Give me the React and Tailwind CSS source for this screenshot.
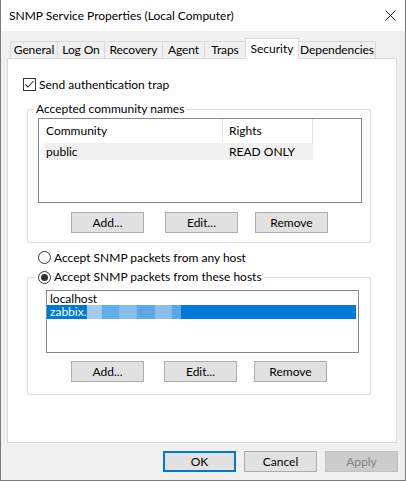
import React from 'react';

const tabs = [
  { label: 'General', w: 'w-[48px]' },
  { label: 'Log On', w: 'w-[48px]' },
  { label: 'Recovery', w: 'w-[59px]' },
  { label: 'Agent', w: 'w-[43px]' },
  { label: 'Traps', w: 'w-[42px]' },
  { label: 'Security', w: 'w-[54px]', active: true },
  { label: 'Dependencies', w: 'w-[78px]' },
];

// blurred part of the host name
const blur = [
  { w: 'w-[15px]', bg: 'bg-[#a3cbee]' },
  { w: 'w-[17px]', bg: 'bg-[#62aee8]' },
  { w: 'w-[18px]', bg: 'bg-[#88bde9]' },
  { w: 'w-[18px]', bg: 'bg-[#5ea9e4]' },
  { w: 'w-[17px]', bg: 'bg-[#8abde8]' },
  { w: 'w-[9px]', bg: 'bg-[#5aa7e6]' },
];

function Button({ children, className = '', variant = 'normal' }) {
  const styles = {
    normal: 'border border-[#adadad] bg-[#e1e1e1] text-black',
    primary: 'border-2 border-[#0078d7] bg-[#e1e1e1] text-black',
    disabled: 'border border-[#bfbfbf] bg-[#cccccc] text-[#838383]',
  };
  return (
    <button
      type="button"
      className={`h-[21px] w-[73px] flex items-center justify-center leading-[14px] ${styles[variant]} ${className}`}
    >
      {children}
    </button>
  );
}

function Checkbox() {
  return (
    <span className="w-[13px] h-[13px] border border-[#333333] bg-white flex items-center justify-center">
      <svg width="11" height="11" viewBox="0 0 11 11">
        <path d="M1.5 5.5 L4 8 L9.5 2" fill="none" stroke="#333333" strokeWidth="1.1" />
      </svg>
    </span>
  );
}

function Radio({ checked }) {
  return (
    <span className="w-[13px] h-[13px] rounded-full border border-[#333333] bg-white flex items-center justify-center">
      {checked && <span className="w-[7px] h-[7px] rounded-full bg-[#333333]" />}
    </span>
  );
}

export default function App() {
  return (
    <div className="w-[406px] h-[481px] flex flex-col bg-[#f0f0f0] border border-t-0 border-[#7a7a7a] font-['Lato',sans-serif] text-[12px] leading-[14px] text-black select-none">
      {/* Title bar */}
      <div className="h-[31px] shrink-0 bg-white flex items-center justify-between pl-[8px]">
        <span>SNMP Service Properties (Local Computer)</span>
        <div className="h-[31px] pr-[9px] flex items-center">
          <svg width="11" height="11" viewBox="0 0 11 11">
            <path d="M0.5 0.5 L10.5 10.5 M10.5 0.5 L0.5 10.5" stroke="#111111" strokeWidth="1" />
          </svg>
        </div>
      </div>

      {/* Tabs */}
      <div className="flex items-end h-[20px] mt-[7px] pl-[9px]">
        {tabs.map((t) =>
          t.active ? (
            <div
              key={t.label}
              className={`${t.w} h-[21px] -mb-px -mr-px relative z-10 bg-white border border-b-0 border-[#d9d9d9] flex items-center justify-center pb-[1px]`}
            >
              {t.label}
            </div>
          ) : (
            <div
              key={t.label}
              className={`${t.w} h-[17px] -mr-px bg-[#f0f0f0] border border-b-0 border-[#d9d9d9] flex items-center justify-center tracking-[-0.1px]`}
            >
              {t.label}
            </div>
          )
        )}
      </div>

      {/* Panel */}
      <div className="ml-[6px] w-[390px] h-[385px] bg-white border border-[#d9d9d9] flex flex-col">
        <label className="mt-[19px] ml-[15px] h-[13px] flex items-center gap-[3px]">
          <Checkbox />
          <span>Send authentication trap</span>
        </label>

        <fieldset className="mt-[11px] ml-[19px] w-[344px] border border-[#dcdcdc] pb-[9px]">
          <legend className="ml-[6px] px-[2px] leading-[14px]">Accepted community names</legend>
          <div className="mt-[2px] ml-[10px] w-[324px] h-[85px] border border-[#828790] pl-[5px]">
            <div className="h-[24px] flex">
              <div className="w-[179px] border-r border-[#e5e5e5] pl-[2px] flex items-center">Community</div>
              <div className="w-[90px] border-r border-[#e5e5e5] pl-[6px] flex items-center">Rights</div>
            </div>
            <div className="h-[17px] w-[269px] flex bg-[#f0f0f0]">
              <div className="w-[179px] pl-[2px] flex items-center">public</div>
              <div className="pl-[6px] flex items-center">READ ONLY</div>
            </div>
          </div>
          <div className="mt-[9px] flex">
            <Button className="ml-[43px]">Add...</Button>
            <Button className="ml-[21px]">Edit...</Button>
            <Button className="ml-[17px]">Remove</Button>
          </div>
        </fieldset>

        <label className="mt-[8px] ml-[30px] h-[13px] flex items-center gap-[3px]">
          <Radio />
          <span>Accept SNMP packets from any host</span>
        </label>

        <fieldset className="mt-[6px] ml-[19px] w-[344px] border border-[#dcdcdc] pb-[12px]">
          <legend className="ml-[8px] px-[2px] leading-[14px]">
            <span className="flex items-center gap-[3px]">
              <Radio checked />
              <span>Accept SNMP packets from these hosts</span>
            </span>
          </legend>
          <div className="mt-[6px] ml-[18px] w-[313px] h-[63px] border border-[#828790] pt-[1px] pr-[2px]">
            <div className="h-[13px] pl-[3px] flex items-center">localhost</div>
            <div className="h-[14px] bg-[#0078d7] text-white flex items-center">
              <span className="shrink-0 pl-[3px] whitespace-nowrap">zabbix.</span>
              {blur.map((b, i) => (
                <span key={i} className={`h-[14px] shrink-0 ${b.w} ${b.bg}`} />
              ))}
            </div>
          </div>
          <div className="mt-[8px] flex">
            <Button className="ml-[43px]">Add...</Button>
            <Button className="ml-[20px]">Edit...</Button>
            <Button className="ml-[17px]">Remove</Button>
          </div>
        </fieldset>
      </div>

      {/* Dialog buttons */}
      <div className="mt-[8px] pr-[7px] flex justify-end gap-[8px]">
        <Button variant="primary">OK</Button>
        <Button>Cancel</Button>
        <Button variant="disabled">Apply</Button>
      </div>
    </div>
  );
}
